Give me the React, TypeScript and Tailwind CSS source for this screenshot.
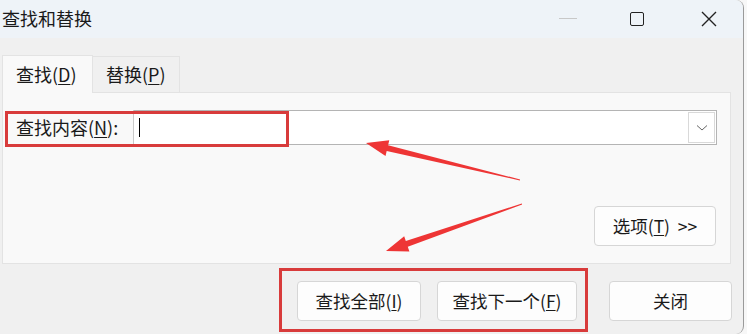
import React from "react";

const font = { fontFamily: '"Noto Sans CJK SC", "Noto Sans", sans-serif' };

const Arrow = ({ x1, y1, x2, y2 }: { x1: number; y1: number; x2: number; y2: number }) => {
    const dx = x2 - x1;
    const dy = y2 - y1;
    const len = Math.sqrt(dx * dx + dy * dy);
    const ux = dx / len;
    const uy = dy / len;
    const px = -uy;
    const py = ux;
    const hx = x2 - ux * 22;
    const hy = y2 - uy * 22;
    const pts = [
        [x1 + px * 0.5, y1 + py * 0.5],
        [hx + px * 3, hy + py * 3],
        [hx + px * 8, hy + py * 8],
        [x2, y2],
        [hx - px * 8, hy - py * 8],
        [hx - px * 3, hy - py * 3],
        [x1 - px * 0.5, y1 - py * 0.5],
    ]
        .map((p) => p.join(","))
        .join(" ");
    return <polygon points={pts} fill="#ee3535" />;
};

const Button = ({ children, className = "" }: { children: React.ReactNode; className?: string }) => (
    <div
        className={`flex items-center justify-center h-[40px] rounded-[4px] bg-[#fdfdfd] border border-[#d6d6d6] text-[17.5px] text-[#1a1a1a] ${className}`}
    >
        {children}
    </div>
);

export default function App() {
    return (
        <div className="relative w-[747px] h-[334px] overflow-hidden bg-[#f7f7f7]" style={font}>
            <div className="w-[744px] h-[334px] bg-[#f0f0f0] border-r border-[#9a9a9a] rounded-tr-[8px] rounded-br-[8px] flex flex-col">
                {/* title bar */}
                <div className="h-[38px] bg-[#eef3f8] flex items-center rounded-tr-[8px]">
                    <div className="pl-[2px] text-[18px] text-[#1a1a1a] flex-1 -mt-[1px]">查找和替换</div>
                    <div className="w-[18px] h-[1px] bg-[#c8c8c8] mr-[53px] mb-[1px]" />
                    <div className="w-[14px] h-[14px] border-[1.5px] border-[#222] rounded-[2px] mr-[57px]" />
                    <svg width="16" height="16" viewBox="0 0 16 16" className="mr-[26px]">
                        <path d="M1 1 L15 15 M15 1 L1 15" stroke="#222" strokeWidth="1.4" />
                    </svg>
                </div>

                {/* tabs */}
                <div className="mt-[17px] flex pl-[2px] h-[37px] relative z-10">
                    <div className="w-[91px] h-[38px] bg-[#f9f9f9] border border-b-0 border-[#e3e3e3] flex items-center pl-[13px] text-[18px] text-[#1a1a1a]">
                        查找(<span className="underline underline-offset-2">D</span>)
                    </div>
                    <div className="w-[87px] h-[36px] mt-[1px] bg-[#f0f0f0] border border-l-0 border-b-0 border-[#e3e3e3] flex items-center pl-[13px] text-[18px] text-[#1a1a1a]">
                        替换(<span className="underline underline-offset-2">P</span>)
                    </div>
                </div>

                {/* panel */}
                <div className="ml-[2px] w-[729px] h-[172px] bg-[#f9f9f9] border border-[#e3e3e3] flex flex-col pt-[17px] pl-[3px] pr-[13px]">
                    <div className="flex h-[35px]">
                        <div className="w-[128px] flex items-center pl-[10px] text-[18px] text-[#1a1a1a] border-r border-[#c9c9c9]">
                            查找内容(<span className="underline underline-offset-2">N</span>):
                        </div>
                        <div className="flex-1 bg-white border border-l-0 border-[#b4b4b4] flex items-center pl-[5px] pr-[1px]">
                            <div className="w-[1px] h-[19px] bg-black" />
                            <div className="flex-1" />
                            <div className="w-[27px] h-[31px] border border-[#d9d9d9] flex items-center justify-center">
                                <svg width="12" height="8" viewBox="0 0 12 8">
                                    <path d="M1 1.5 L6 6 L11 1.5" stroke="#666" strokeWidth="1" fill="none" />
                                </svg>
                            </div>
                        </div>
                    </div>
                    <div className="flex justify-end mt-[61px] pr-[1px]">
                        <Button className="w-[122px] h-[38px]">
                            选项(<span className="underline underline-offset-2">T</span>)&nbsp;&nbsp;&gt;&gt;
                        </Button>
                    </div>
                </div>

                {/* bottom buttons */}
                <div className="flex mt-[17px] pl-[297px]">
                    <Button className="w-[124px]">
                        查找全部(<span className="underline underline-offset-2">I</span>)
                    </Button>
                    <Button className="w-[140px] ml-[16px] border-[#2a6f99]">
                        查找下一个(<span className="underline underline-offset-2">F</span>)
                    </Button>
                    <Button className="w-[123px] ml-[32px]">关闭</Button>
                </div>
            </div>

            {/* annotations */}
            <div className="absolute left-[5px] top-[111px] w-[284px] h-[36px] border-[3px] border-[#d83b3b]" />
            <div className="absolute left-[279px] top-[268px] w-[309px] h-[64px] border-[3px] border-[#d83b3b]" />
            <svg className="absolute left-0 top-0" width="747" height="334">
                <Arrow x1={520} y1={180} x2={366} y2={143} />
                <Arrow x1={522} y1={204} x2={386} y2={251} />
            </svg>
        </div>
    );
}
